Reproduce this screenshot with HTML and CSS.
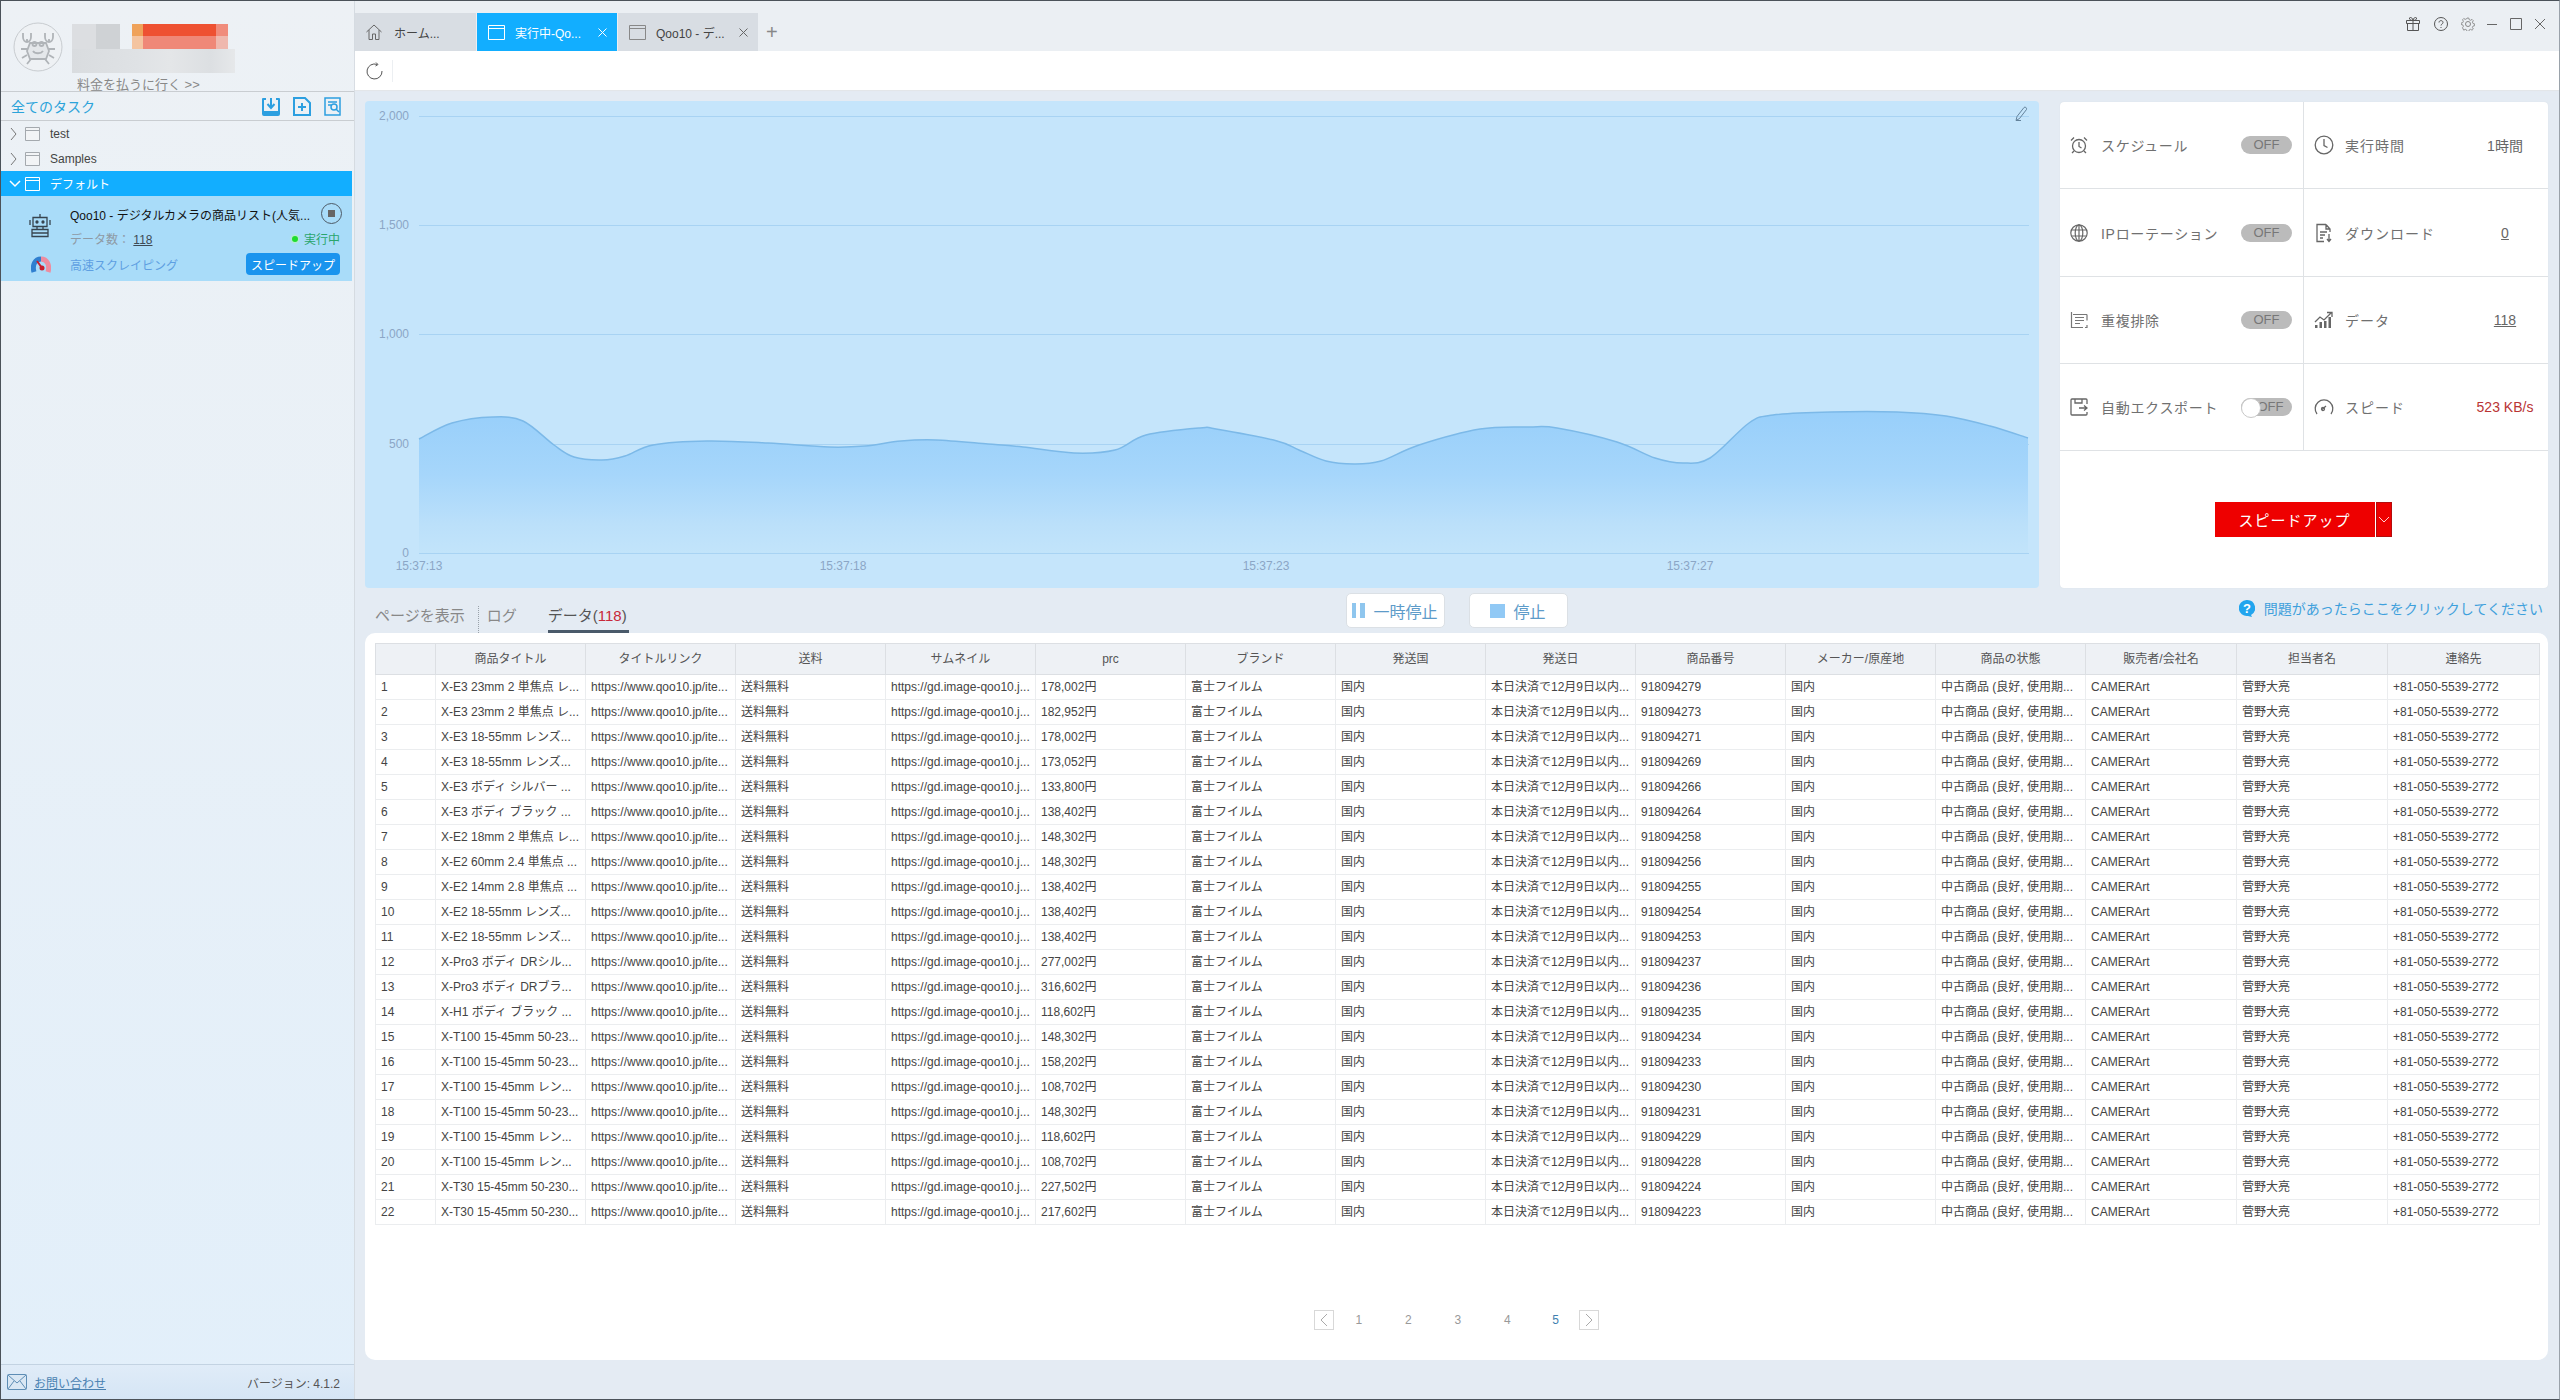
FILE: index.html
```html
<!DOCTYPE html>
<html lang="ja">
<head>
    <meta charset="UTF-8">
    <title>タスク実行中</title>
    <link rel="stylesheet" href="styles.css">
</head>
<body>
<div class="app">

    <!-- Sidebar -->
    <aside class="sidebar">
        <div class="profile">
            <svg class="avatar" viewBox="0 0 50 50" fill="none" stroke="#b0b4b8" stroke-width="1.800">
                <circle cx="25" cy="25" r="24" fill="#eef1f4" stroke="#c8ccd0" stroke-width="1"/>
                <path d="M14 21v-4M10 11v4c0 3 2 5 4 5s4-2 4-5v-4M36 21v-4M32 11v4c0 3 2 5 4 5s4-2 4-5v-4"/>
                <path d="M17 21h16l3 8-3 8H17l-3-8z" fill="#e4e7ea"/>
                <path d="M20 29c2 3 8 3 10 0M14 27H8M14 33l-5 3M36 27h6M36 33l5 3M18 37l-4 5M32 37l4 5"/>
                <circle cx="21.500" cy="22" r="2"/><circle cx="28.500" cy="22" r="2"/>
            </svg>
            <div class="profile-blur">
                <div class="blur-top"><span class="blur-grey"></span><span class="blur-red"></span></div>
                <div class="blur-bottom"></div>
            </div>
            <a class="pay-link" href="#">料金を払うに行く &gt;&gt;</a>
        </div>

        <div class="task-head">
            <span class="task-head-title">全てのタスク</span>
            <div class="task-head-icons">
                <svg width="20" height="19" viewBox="0 0 20 19"><path d="M1 2a1 1 0 0 1 1-1h3v2H3v11h14V3h-2V1h3a1 1 0 0 1 1 1v15a2 2 0 0 1-2 2H3a2 2 0 0 1-2-2z" fill="#2c9fe0"/><path d="M10 1v9M6.500 7l3.500 4 3.500-4" fill="none" stroke="#2c9fe0" stroke-width="2"/></svg>
                <svg width="20" height="19" viewBox="0 0 20 19" fill="none" stroke="#2c9fe0" stroke-width="2"><path d="M2 1h11l5 5v12H2z"/><path d="M10 6v8M6 10h8"/></svg>
                <svg width="20" height="19" viewBox="0 0 20 19" fill="none" stroke="#2c9fe0" stroke-width="1.500"><path d="M2 1h15v17H2z"/><path d="M5 5h9M5 8h3"/><circle cx="11" cy="10" r="3"/><path d="M13 12l3 3"/></svg>
            </div>
        </div>

        <div class="tree">
            <div class="tree-row">
                <svg class="chevron" width="7" height="14" viewBox="0 0 7 14" fill="none" stroke="#777"><path d="M1 1l5 6-5 6"/></svg>
                <svg class="folder" width="15" height="15" viewBox="0 0 15 15" fill="#f2f4f6" stroke="#a4a9ae"><path d="M.5 1.500h14v13H.5zM.5 4.500h14"/></svg>
                <span>test</span>
            </div>
            <div class="tree-row">
                <svg class="chevron" width="7" height="14" viewBox="0 0 7 14" fill="none" stroke="#777"><path d="M1 1l5 6-5 6"/></svg>
                <svg class="folder" width="15" height="15" viewBox="0 0 15 15" fill="#f2f4f6" stroke="#a4a9ae"><path d="M.5 1.500h14v13H.5zM.5 4.500h14"/></svg>
                <span>Samples</span>
            </div>
            <div class="tree-row tree-row-active">
                <svg class="chevron-open" width="12" height="8" viewBox="0 0 12 8" fill="none" stroke="#fff" stroke-width="1.500"><path d="M1 1l5 5 5-5"/></svg>
                <svg class="folder" width="15" height="15" viewBox="0 0 15 15" fill="none" stroke="#fff"><path d="M.5 1.500h14v13H.5zM.5 4.500h14"/></svg>
                <span>デフォルト</span>
            </div>
        </div>

        <div class="task-card">
            <svg class="task-robot" width="22" height="24" viewBox="0 0 22 24" fill="none" stroke="#37444f" stroke-width="1.300">
                <path d="M11 0v3M4 3.500h14v9H4zM1 6v5M21 6v5M8 12.500v3M14 12.500v3M3 15.500h16v7H3zM3 19h16"/>
                <circle cx="8" cy="8" r="1" fill="#37444f"/><circle cx="14" cy="8" r="1" fill="#37444f"/>
            </svg>
            <div class="task-title-row">
                <span class="task-title">Qoo10 - デジタルカメラの商品リスト(人気...</span>
                <span class="task-stop"><i></i></span>
            </div>
            <div class="task-count">データ数： <u>118</u></div>
            <div class="task-state"><i></i>実行中</div>
            <svg class="task-gauge" width="20" height="17" viewBox="0 0 20 17" fill="none">
                <path d="M3 16C1 9 4 3 10 3" stroke="#2f7fd0" stroke-width="5"/>
                <path d="M10 3c6 0 9 6 7 13" stroke="#ee8ca0" stroke-width="5"/>
                <path d="M6 5l5 7" stroke="#c81e2e" stroke-width="2"/><circle cx="11" cy="12" r="2.500" fill="#c81e2e"/>
            </svg>
            <div class="task-fast">高速スクレイピング</div>
            <button class="task-speed">スピードアップ</button>
        </div>

        <div class="sidebar-foot">
            <svg width="20" height="16" viewBox="0 0 20 16" fill="#d9e7f4" stroke="#5d8db5"><rect x=".5" y=".5" width="19" height="15" rx="1"/><path d="M1 1l9 8 9-8M1 15l6-8M19 15l-6-8" fill="none"/></svg>
            <a class="contact-link" href="#">お問い合わせ</a>
            <span class="version">バージョン: 4.1.2</span>
        </div>
    </aside>

    <main class="main">
        <!-- Tab bar -->
        <div class="tabbar">
            <div class="tab tab-home">
                <svg width="16" height="16" viewBox="0 0 16 16" fill="none" stroke="#666"><path d="M.5 8L8 1l7.500 7M3 6v9.500h3.500V10h3v5.500H13V6"/></svg>
                <span class="tab-label">ホーム...</span>
            </div>
            <div class="tab tab-active">
                <svg width="17" height="15" viewBox="0 0 17 15" fill="none" stroke="#fff"><path d="M.5.500h16v14H.5zM.5 3.500h16"/></svg>
                <span class="tab-label">実行中-Qo...</span>
                <svg class="tab-close" width="9" height="9" viewBox="0 0 9 9" fill="none" stroke="#fff"><path d="M.5.500l8 8M8.500.500l-8 8"/></svg>
            </div>
            <div class="tab">
                <svg width="17" height="15" viewBox="0 0 17 15" fill="none" stroke="#888"><path d="M.5.500h16v14H.5zM.5 3.500h16"/></svg>
                <span class="tab-label">Qoo10 - デ...</span>
                <svg class="tab-close" width="9" height="9" viewBox="0 0 9 9" fill="none" stroke="#666"><path d="M.5.500l8 8M8.500.500l-8 8"/></svg>
            </div>
            <span class="tab-add">+</span>
            <div class="win-controls">
                <svg width="14" height="14" viewBox="0 0 14 14" fill="none" stroke="#555"><path d="M.5 3.500h13v3H.5zM1.500 6.500v7h11v-7M7 3.500v10M7 3.500C5 3.500 3 2.500 3.500 1S6.500.5 7 3.500C7.500.5 10 -.5 10.500 1s-1.500 2.500-3.500 2.500"/></svg>
                <svg width="14" height="14" viewBox="0 0 14 14" fill="none" stroke="#555"><circle cx="7" cy="7" r="6.500"/><path d="M5 5.500C5 3 9 3 9 5.500c0 1.500-2 1.500-2 3M7 10v1"/></svg>
                <svg width="14" height="14" viewBox="0 0 14 14" fill="none" stroke="#888"><circle cx="7" cy="7" r="2.500"/><path d="M6 .500h2l.4 1.800 1.600.7 1.600-1 1.400 1.400-1 1.600.7 1.600 1.800.4v2l-1.800.4-.7 1.600 1 1.600-1.400 1.400-1.600-1-1.600.7-.4 1.800H6l-.4-1.800-1.600-.7-1.600 1L1 11.300l1-1.600-.7-1.600-1.800-.4V6l1.800-.4.7-1.600-1-1.600L2.400 1l1.600 1 1.600-.7z" transform="translate(.6 .6) scale(.9)"/></svg>
                <svg width="12" height="14" viewBox="0 0 12 14" fill="none" stroke="#666"><path d="M1 7.500h10"/></svg>
                <svg width="12" height="14" viewBox="0 0 12 14" fill="none" stroke="#666"><path d="M.5 1.500h11v11H.5z"/></svg>
                <svg width="12" height="14" viewBox="0 0 12 14" fill="none" stroke="#666"><path d="M1 2l10 10M11 2L1 12"/></svg>
            </div>
        </div>

        <!-- Reload bar -->
        <div class="toolbar">
            <svg width="18" height="18" viewBox="0 0 18 18" fill="none" stroke="#555"><path d="M11 2.400A7.500 7.500 0 1 0 16 9M10 .5l2 2-2.500 1.500"/></svg>
            <span class="toolbar-sep"></span>
        </div>

        <div class="content">
            <div class="top-row">
                <section class="chart-panel">
                    <svg class="chart" viewBox="365 101 1674 487" preserveAspectRatio="none">
                        <defs>
                            <linearGradient id="areaFill" gradientUnits="userSpaceOnUse" x1="0" y1="412" x2="0" y2="553">
                                <stop offset="0" stop-color="#98cffa"/>
                                <stop offset=".45" stop-color="#a6d6fb"/>
                                <stop offset=".8" stop-color="#bbe0fa"/>
                                <stop offset="1" stop-color="#c2e4fa"/>
                            </linearGradient>
                        </defs>
                        <g class="grid-lines">
                            <line x1="419" x2="2029" y1="116.500" y2="116.500"/>
                            <line x1="419" x2="2029" y1="225.500" y2="225.500"/>
                            <line x1="419" x2="2029" y1="334.500" y2="334.500"/>
                            <line x1="419" x2="2029" y1="444.500" y2="444.500"/>
                        </g>
                        <path id="chartArea" fill="url(#areaFill)"/>
                        <path id="chartLine" fill="none" stroke="#7cb9e8" stroke-width="1.500"/>
                        <g class="grid-lines">
                            <line x1="419" x2="2029" y1="553.500" y2="553.500"/>
                        </g>
                        <g class="axis-y">
                            <text x="409" y="120">2,000</text>
                            <text x="409" y="229">1,500</text>
                            <text x="409" y="338">1,000</text>
                            <text x="409" y="448">500</text>
                            <text x="409" y="557">0</text>
                        </g>
                        <g class="axis-x">
                            <text x="419" y="570">15:37:13</text>
                            <text x="843" y="570">15:37:18</text>
                            <text x="1266" y="570">15:37:23</text>
                            <text x="1690" y="570">15:37:27</text>
                        </g>
                        <path d="M2016 120.500l1-4 7-9c1-1 3 0 2.500 2l-7 9zM2016 120.500h5" fill="none" stroke="#64839c"/>
                    </svg>
                </section>

                <section class="stats-panel">
                    <div class="stats-grid">
                        <div class="stat stat-left">
                            <svg class="stat-icon" width="18" height="18" viewBox="0 0 18 18" fill="none" stroke="#666" stroke-width="1.300"><circle cx="9" cy="10" r="6.500"/><path d="M9 6v4.500l2.500 1.500M1 4.500L4 1.500M17 4.500l-3-3M4 15l-2 2M14 15l2 2"/></svg>
                            <span class="stat-label">スケジュール</span>
                            <span class="toggle">OFF</span>
                        </div>
                        <div class="stat stat-right">
                            <svg class="stat-icon" width="20" height="20" viewBox="0 0 20 20" fill="none" stroke="#666" stroke-width="1.300"><circle cx="10" cy="10" r="8.800"/><path d="M10 4v6.500l3.500 2"/></svg>
                            <span class="stat-label">実行時間</span>
                            <span class="stat-value">1時間</span>
                        </div>
                        <div class="stat stat-left">
                            <svg class="stat-icon" width="18" height="18" viewBox="0 0 18 18" fill="none" stroke="#666" stroke-width="1.200"><circle cx="9" cy="9" r="8.200"/><ellipse cx="9" cy="9" rx="3.800" ry="8.200"/><path d="M9 .8v16.400M1.500 6h15M1.500 12h15"/></svg>
                            <span class="stat-label">IPローテーション</span>
                            <span class="toggle">OFF</span>
                        </div>
                        <div class="stat stat-right">
                            <svg class="stat-icon" width="20" height="20" viewBox="0 0 20 20" fill="none" stroke="#666" stroke-width="1.300"><path d="M12 1.500H3v17h7M12 1.500l4 4.500v3M12 1.500V6h4M6 9h7M6 12h5M6 15h3"/><path d="M15 11v7M13 16l2 2.500 2-2.500"/></svg>
                            <span class="stat-label">ダウンロード</span>
                            <span class="stat-value"><u>0</u></span>
                        </div>
                        <div class="stat stat-left">
                            <svg class="stat-icon" width="18" height="18" viewBox="0 0 18 18" fill="none" stroke="#777" stroke-width="1.200"><path d="M3 3.500h14M1.500 1v15.500H13M5 6.500h9M5 9.500h9M5 12.500h5M17 3.500v6M17 14v2.500h-2"/></svg>
                            <span class="stat-label">重複排除</span>
                            <span class="toggle">OFF</span>
                        </div>
                        <div class="stat stat-right">
                            <svg class="stat-icon" width="20" height="20" viewBox="0 0 20 20" fill="#666"><path d="M1 15h2.500v3H1zM5.500 12H8v6H5.500zM10 11h2.500v7H10zM14.500 7H17v11h-2.500z"/><path d="M1 12l5-5 4 3 7-7M13 2.500h5V7" fill="none" stroke="#666" stroke-width="1.300"/></svg>
                            <span class="stat-label">データ</span>
                            <span class="stat-value"><u>118</u></span>
                        </div>
                        <div class="stat stat-left">
                            <svg class="stat-icon" width="18" height="18" viewBox="0 0 18 18" fill="none" stroke="#666" stroke-width="1.300"><path d="M17 6V2a1 1 0 0 0-1-1H2a1 1 0 0 0-1 1v14a1 1 0 0 0 1 1h14a1 1 0 0 0 1-1v-2M5 1v4h7V1M9 10h8M14 7.500l3 2.500-3 2.500"/></svg>
                            <span class="stat-label">自動エクスポート</span>
                            <span class="toggle toggle-knob">OFF</span>
                        </div>
                        <div class="stat stat-right">
                            <svg class="stat-icon" width="20" height="20" viewBox="0 0 20 20" fill="none" stroke="#666" stroke-width="1.300"><path d="M3 17A8.800 8.800 0 1 1 17 17M8 12.500l4-3.500"/><circle cx="9" cy="12" r="1.500"/></svg>
                            <span class="stat-label">スピード</span>
                            <span class="stat-value stat-speed">523 KB/s</span>
                        </div>
                    </div>
                    <div class="speed-area">
                        <button class="speed-main">スピードアップ</button>
                        <button class="speed-drop">
                            <svg width="12" height="7" viewBox="0 0 12 7" fill="none" stroke="#ffd0d0"><path d="M1 1l5 5 5-5"/></svg>
                        </button>
                    </div>
                </section>
            </div>

            <div class="detail-head">
                <div class="detail-tabs">
                    <span class="detail-tab">ページを表示</span>
                    <span class="detail-tab detail-tab-sep">ログ</span>
                    <span class="detail-tab detail-tab-active">データ(<b>118</b>)</span>
                </div>
                <div class="detail-buttons">
                    <button class="run-btn"><i class="icon-pause"></i>一時停止</button>
                    <button class="run-btn run-btn-stop"><i class="icon-stop"></i>停止</button>
                </div>
                <a class="help-link" href="#">
                    <svg width="16" height="17" viewBox="0 0 16 17"><path d="M8 0a8 8 0 0 1 4 15l1 2-4-1.100A8 8 0 1 1 8 0z" fill="#22a5ee"/><text x="8" y="12.500" class="help-mark">?</text></svg>
                    問題があったらここをクリックしてください
                </a>
            </div>

            <section class="data-card">
                <table class="data-table">
                    <thead>
                        <tr>
                            <th class="col-no"></th>
                            <th>商品タイトル</th><th>タイトルリンク</th><th>送料</th><th>サムネイル</th><th>prc</th>
                            <th>ブランド</th><th>発送国</th><th>発送日</th><th>商品番号</th><th>メーカー/原産地</th>
                            <th>商品の状態</th><th class="col-wide">販売者/会社名</th><th class="col-wide">担当者名</th><th class="col-last">連絡先</th>
                        </tr>
                    </thead>
                    <tbody id="rows"></tbody>
                </table>
                <div class="pager">
                    <span class="pager-box"><svg width="8" height="14" viewBox="0 0 8 14" fill="none" stroke="#aaa"><path d="M7 1L1 7l6 6"/></svg></span>
                    <span class="pager-num">1</span>
                    <span class="pager-num">2</span>
                    <span class="pager-num">3</span>
                    <span class="pager-num">4</span>
                    <span class="pager-num pager-current">5</span>
                    <span class="pager-box"><svg width="8" height="14" viewBox="0 0 8 14" fill="none" stroke="#aaa"><path d="M1 1l6 6-6 6"/></svg></span>
                </div>
            </section>
        </div>
    </main>
</div>
<script src="script.js"></script>
</body>
</html>
```

FILE: styles.css
```css
* {
    box-sizing: border-box;
}
html, body {
    margin: 0;
    padding: 0;
}
body {
    font-family: "Liberation Sans", "Noto Sans CJK JP", sans-serif;
    font-size: 12px;
    color: #444;
}
button {
    font-family: inherit;
    cursor: pointer;
}
.app {
    display: flex;
    width: 2560px;
    height: 1400px;
    border: 1px solid #4b5259;
    border-right-color: #9aa2aa;
    overflow: hidden;
}

/* Sidebar */
.sidebar {
    display: flex;
    flex-direction: column;
    flex: none;
    width: 354px;
    padding-right: 2px;
    background: linear-gradient(#edf1f5, #e2effa);
    border-right: 1px solid #d5dbe1;
}
.profile {
    position: relative;
    flex: none;
    height: 91px;
    border-bottom: 1px solid #c9cdd1;
    margin-right: -2px;
}
.avatar {
    position: absolute;
    left: 12px;
    top: 21px;
    width: 50px;
    height: 50px;
}
.profile-blur {
    position: absolute;
    left: 71px;
    top: 23px;
    width: 163px;
}
.blur-top {
    display: flex;
    gap: 12px;
    height: 25px;
}
.blur-grey {
    width: 48px;
    background: linear-gradient(90deg, #dcdee1 0 50%, #cfd2d5 50%);
}
.blur-red {
    width: 96px;
    background:
        linear-gradient(#ee5132 0 50%, #ef8878 50%) 11px 0 / 73px 100% no-repeat,
        linear-gradient(#efa25a 0 50%, #f4c4a0 50%) 0 0 / 11px 100% no-repeat,
        linear-gradient(#f08c7c 0 50%, #efb8ae 50%);
}
.blur-bottom {
    height: 24px;
    background: linear-gradient(90deg, #d9dcdf, #dfe2e5 40%, #e4e6e8 60%, #dcdfe2 85%, #e6e8ea);
}
.pay-link {
    position: absolute;
    left: 76px;
    top: 76px;
    color: #888;
    font-size: 13px;
    line-height: 16px;
    text-decoration: none;
}
.task-head {
    display: flex;
    align-items: center;
    justify-content: space-between;
    flex: none;
    height: 29px;
    padding: 0 11px 0 10px;
    border-bottom: 1px solid #c9cdd1;
    margin-right: -2px;
}
.task-head-title {
    font-size: 14px;
    color: #2ba3da;
}
.task-head-icons {
    display: flex;
    gap: 11px;
}
.tree {
    flex: none;
}
.tree-row {
    display: flex;
    align-items: center;
    height: 25px;
    padding-left: 9px;
    font-size: 12px;
    color: #444;
}
.tree-row .folder {
    margin-left: 7px;
    margin-right: 10px;
}
.tree-row .chevron {
    margin-right: 1px;
}
.tree-row-active {
    background: #12aeff;
    color: #fff;
    padding-left: 8px;
}
.tree-row-active .folder {
    margin-left: 4px;
}
.task-card {
    display: grid;
    grid-template-columns: 69px 176px 1fr;
    grid-template-rows: 26px 25px 26px;
    align-items: center;
    flex: none;
    height: 85px;
    padding: 4px 12px 0 0;
    background: #a9dcf9;
}
.task-robot {
    grid-column: 1;
    grid-row: 1 / 3;
    margin-left: 28px;
}
.task-title-row {
    grid-column: 2 / 4;
    display: flex;
    align-items: center;
    justify-content: space-between;
    margin-right: -2px;
}
.task-title {
    margin-top: 2px;
    color: #111;
}
.task-stop {
    display: flex;
    align-items: center;
    justify-content: center;
    width: 21px;
    height: 21px;
    border: 1px solid #4d5a66;
    border-radius: 50%;
}
.task-stop i {
    width: 7px;
    height: 7px;
    background: #666;
}
.task-count {
    grid-column: 2;
    color: #8e9aa5;
}
.task-count u {
    color: #3d4a55;
}
.task-state {
    grid-column: 3;
    display: flex;
    align-items: center;
    justify-content: flex-end;
    color: #2aa56c;
}
.task-state i {
    width: 6px;
    height: 6px;
    margin-right: 6px;
    border-radius: 50%;
    background: #1fdc2e;
    box-shadow: 0 0 2px 1px #b8f2c0;
}
.task-gauge {
    grid-column: 1;
    margin-left: 30px;
}
.task-fast {
    color: #5e9fe2;
}
.task-speed {
    justify-self: end;
    width: 94px;
    height: 22px;
    padding: 0;
    border: none;
    border-radius: 4px;
    background: #1a94ee;
    color: #fff;
    font-size: 12px;
}
.sidebar-foot {
    display: flex;
    align-items: center;
    flex: none;
    height: 35px;
    margin-top: auto;
    margin-right: -2px;
    padding: 0 14px 0 6px;
    border-top: 1px solid #c3d3e2;
    background: linear-gradient(#e0ecf8, #d5e5f5);
}
.contact-link {
    margin-left: 7px;
    color: #4a82b2;
    text-decoration: underline;
}
.version {
    margin-left: auto;
    color: #555;
}

/* Main area */
.main {
    display: flex;
    flex-direction: column;
    flex: 1;
    min-width: 0;
    background: #e4ebf3;
}
.tabbar {
    display: flex;
    align-items: flex-end;
    flex: none;
    height: 50px;
    background: #ebeff3;
}
.tab {
    display: flex;
    align-items: center;
    gap: 10px;
    width: 140px;
    height: 38px;
    padding-left: 11px;
    background: #d8dde3;
    color: #444;
}
.tab-home {
    width: 121px;
    gap: 12px;
}
.tab-active {
    background: #12aeff;
    color: #fff;
    margin-right: 1px;
    margin-left: 1px;
}
.tab-close {
    margin-left: auto;
    margin-right: 10px;
}
.tab-add {
    align-self: flex-end;
    margin-left: 8px;
    height: 38px;
    color: #888;
    font-size: 20px;
    line-height: 38px;
}
.win-controls {
    display: flex;
    align-items: center;
    align-self: flex-start;
    gap: 12px;
    margin-left: auto;
    margin-top: 16px;
    padding-right: 13px;
}
.win-controls svg:nth-child(1) {
    margin-right: 2px;
}
.win-controls svg:nth-child(2) {
    margin-right: 1px;
}
.win-controls svg:nth-child(3) {
    margin-right: -1px;
}
.toolbar {
    display: flex;
    align-items: center;
    flex: none;
    height: 39px;
    padding-left: 11px;
    background: #fff;
    box-shadow: 0 1px 1px #e3e6e9;
}
.toolbar-sep {
    width: 1px;
    height: 22px;
    margin-left: 8px;
    background: #eceff2;
}
.content {
    display: flex;
    flex-direction: column;
    flex: 1;
    min-height: 0;
    padding: 11px 11px 39px 10px;
}
.top-row {
    display: flex;
    gap: 21px;
    flex: none;
    height: 487px;
}

/* Chart */
.chart-panel {
    flex: none;
    width: 1674px;
    border-radius: 4px;
    background: #c5e5fb;
    overflow: hidden;
}
.chart {
    display: block;
    width: 100%;
    height: 100%;
}
.grid-lines line {
    stroke: #a8d3f3;
    stroke-width: 1;
}
.axis-y text, .axis-x text {
    font-size: 12px;
    fill: #8ba6c6;
}
.axis-y text {
    text-anchor: end;
}
.axis-x text {
    text-anchor: middle;
}

/* Stats */
.stats-panel {
    display: flex;
    flex-direction: column;
    flex: 1;
    margin-top: 1px;
    border-radius: 4px;
    background: #fff;
    box-shadow: 0 0 1px #cfd6dd;
}
.stats-grid {
    display: grid;
    grid-template-columns: 244px 244px;
    grid-template-rows: 87px 88px 87px 87px;
    flex: none;
}
.stat {
    display: flex;
    align-items: center;
    padding-left: 10px;
    border-bottom: 1px solid #dfe2e5;
    font-size: 14px;
    color: #707070;
}
.stat-left {
    padding-right: 11px;
    border-right: 1px solid #dfe2e5;
}
.stat-icon {
    flex: none;
}
.stat-left .stat-label {
    margin-left: 13px;
    letter-spacing: .7px;
}
.stat-right .stat-label {
    margin-left: 11px;
    letter-spacing: 1px;
}
.toggle {
    position: relative;
    flex: none;
    width: 51px;
    height: 18px;
    margin-left: auto;
    border-radius: 9px;
    background: #bbb;
    color: #777;
    font-size: 13px;
    line-height: 18px;
    text-align: center;
}
.toggle-knob {
    padding-left: 8px;
}
.toggle-knob::before {
    content: "";
    position: absolute;
    left: 0;
    top: 0;
    width: 18px;
    height: 18px;
    border: 1px solid #c8c8c8;
    border-radius: 50%;
    background: #fff;
}
.stat-value {
    flex: none;
    width: 86px;
    margin-left: auto;
    text-align: center;
    color: #666;
}
.stat-speed {
    color: #b93434;
}
.speed-area {
    display: flex;
    align-items: center;
    justify-content: center;
    flex: 1;
    gap: 1px;
    padding-right: 2px;
}
.speed-main, .speed-drop {
    height: 35px;
    padding: 0;
    border: none;
    background: #ee0000;
    color: #fff;
    font-size: 15px;
    letter-spacing: 1px;
}
.speed-main {
    width: 160px;
}
.speed-drop {
    display: flex;
    align-items: center;
    justify-content: center;
    width: 16px;
    box-shadow: inset 0 0 0 1px #b40c0c;
}

/* Tabs and buttons above the table */
.detail-head {
    display: grid;
    grid-template-columns: 1fr auto 1fr;
    flex: none;
    height: 45px;
}
.detail-tabs {
    display: flex;
    align-items: flex-end;
    padding-left: 10px;
}
.detail-tab {
    padding-bottom: 7px;
    color: #888;
    font-size: 15px;
    line-height: 20px;
}
.detail-tab-sep {
    margin-left: 13px;
    padding-left: 8px;
    border-left: 1px dotted #9aa2aa;
}
.detail-tab-active {
    width: 81px;
    margin-left: 31px;
    border-bottom: 3px solid #4a5a6a;
    border-radius: 2px 2px 0 0;
    padding-bottom: 4px;
    color: #555;
    white-space: nowrap;
}
.detail-tab-active b {
    color: #c8283a;
    font-weight: normal;
}
.detail-buttons {
    display: flex;
    gap: 24px;
    padding-top: 5px;
}
.run-btn {
    display: flex;
    align-items: center;
    justify-content: center;
    gap: 8px;
    width: 99px;
    height: 35px;
    padding: 0;
    border: 1px solid #dbe0e5;
    border-radius: 5px;
    background: #fff;
    color: #5d9bc9;
    font-size: 16px;
}
.icon-pause {
    width: 13px;
    height: 15px;
    background: linear-gradient(90deg, #8fc6ee 0 4.500px, transparent 4.500px 8.500px, #8fc6ee 8.500px);
}
.icon-stop {
    width: 15px;
    height: 14px;
    background: #91c9f5;
}
.help-link {
    display: flex;
    align-items: center;
    justify-content: flex-end;
    gap: 9px;
    padding: 0 5px 5px 0;
    color: #3ea0dc;
    font-size: 14px;
    text-decoration: none;
}
.help-mark {
    font-size: 13px;
    font-weight: bold;
    fill: #fff;
    text-anchor: middle;
}

/* Data table */
.data-card {
    display: flex;
    flex-direction: column;
    flex: 1;
    min-height: 0;
    padding: 10px 9px 30px 10px;
    border-radius: 10px;
    background: #fff;
}
.data-table {
    table-layout: fixed;
    width: 2164px;
    border-collapse: collapse;
    flex: none;
    line-height: 16px;
}
.data-table th, .data-table td {
    overflow: hidden;
    white-space: nowrap;
    font-weight: normal;
}
.data-table th {
    width: 150px;
    height: 31px;
    padding: 0;
    border: 1px solid #dcdfe3;
    background: #eef1f5;
    color: #555;
    text-align: center;
}
.data-table th.col-no {
    width: 60px;
}
.data-table th.col-wide {
    width: 151px;
}
.data-table th.col-last {
    width: 152px;
}
.data-table td {
    height: 25px;
    padding: 0 0 0 5px;
    border: 1px solid #ebedef;
    color: #444;
}
.pager {
    display: flex;
    align-items: center;
    margin-top: auto;
    margin-left: 939px;
    height: 20px;
    color: #999;
}
.pager-box {
    display: flex;
    align-items: center;
    justify-content: center;
    flex: none;
    width: 20px;
    height: 20px;
    border: 1px solid #d8d8d8;
}
.pager-num {
    width: 49.500px;
    text-align: center;
    font-size: 12px;
}
.pager-current {
    width: 47px;
    color: #3f7fb0;
}
```

FILE: script.js
```js
// table content, one line per row: title, price, item number
const products = [
    ['X-E3 23mm 2 単焦点 レ...', '178,002円', '918094279'],
    ['X-E3 23mm 2 単焦点 レ...', '182,952円', '918094273'],
    ['X-E3 18-55mm レンズ...', '178,002円', '918094271'],
    ['X-E3 18-55mm レンズ...', '173,052円', '918094269'],
    ['X-E3 ボディ シルバー ...', '133,800円', '918094266'],
    ['X-E3 ボディ ブラック ...', '138,402円', '918094264'],
    ['X-E2 18mm 2 単焦点 レ...', '148,302円', '918094258'],
    ['X-E2 60mm 2.4 単焦点 ...', '148,302円', '918094256'],
    ['X-E2 14mm 2.8 単焦点 ...', '138,402円', '918094255'],
    ['X-E2 18-55mm レンズ...', '138,402円', '918094254'],
    ['X-E2 18-55mm レンズ...', '138,402円', '918094253'],
    ['X-Pro3 ボディ DRシル...', '277,002円', '918094237'],
    ['X-Pro3 ボディ DRブラ...', '316,602円', '918094236'],
    ['X-H1 ボディ ブラック ...', '118,602円', '918094235'],
    ['X-T100 15-45mm 50-23...', '148,302円', '918094234'],
    ['X-T100 15-45mm 50-23...', '158,202円', '918094233'],
    ['X-T100 15-45mm レン...', '108,702円', '918094230'],
    ['X-T100 15-45mm 50-23...', '148,302円', '918094231'],
    ['X-T100 15-45mm レン...', '118,602円', '918094229'],
    ['X-T100 15-45mm レン...', '108,702円', '918094228'],
    ['X-T30 15-45mm 50-230...', '227,502円', '918094224'],
    ['X-T30 15-45mm 50-230...', '217,602円', '918094223']
];

const tbody = document.getElementById('rows');
products.forEach((p, i) => {
    const cells = [
        i + 1, p[0], 'https://www.qoo10.jp/ite...', '送料無料', 'https://gd.image-qoo10.j...',
        p[1], '富士フイルム', '国内', '本日決済で12月9日以内...', p[2], '国内',
        '中古商品 (良好, 使用期...', 'CAMERArt', '菅野大亮', '+81-050-5539-2772'
    ];
    const tr = document.createElement('tr');
    cells.forEach(text => {
        const td = document.createElement('td');
        td.textContent = text;
        tr.appendChild(td);
    });
    tbody.appendChild(tr);
});

// chart curve, smoothed with catmull-rom
const points = [
    [419, 439], [452, 423], [493, 417], [523, 421], [554, 445], [574, 457], [602, 460], [625, 456],
    [653, 445], [707, 441], [768, 443], [829, 447], [865, 446], [901, 441], [936, 440], [988, 444],
    [1023, 447], [1074, 453], [1115, 450], [1146, 435], [1200, 428], [1216, 429], [1277, 441],
    [1299, 450], [1326, 461], [1354, 464], [1381, 461], [1419, 445], [1480, 429], [1529, 427],
    [1557, 428], [1617, 442], [1655, 458], [1683, 463], [1710, 458], [1749, 423], [1773, 415],
    [1831, 412], [1897, 412], [1946, 416], [1990, 426], [2028, 438]
];

let line = `M${points[0][0]} ${points[0][1]}`;
for (let i = 0; i < points.length - 1; i++) {
    const p0 = points[Math.max(i - 1, 0)];
    const p1 = points[i];
    const p2 = points[i + 1];
    const p3 = points[Math.min(i + 2, points.length - 1)];
    const c1 = [p1[0] + (p2[0] - p0[0]) / 6, p1[1] + (p2[1] - p0[1]) / 6];
    const c2 = [p2[0] - (p3[0] - p1[0]) / 6, p2[1] - (p3[1] - p1[1]) / 6];
    line += ` C${c1[0]} ${c1[1]} ${c2[0]} ${c2[1]} ${p2[0]} ${p2[1]}`;
}
document.getElementById('chartLine').setAttribute('d', line);
document.getElementById('chartArea').setAttribute('d', `${line} L2028 553 L419 553 Z`);
```
